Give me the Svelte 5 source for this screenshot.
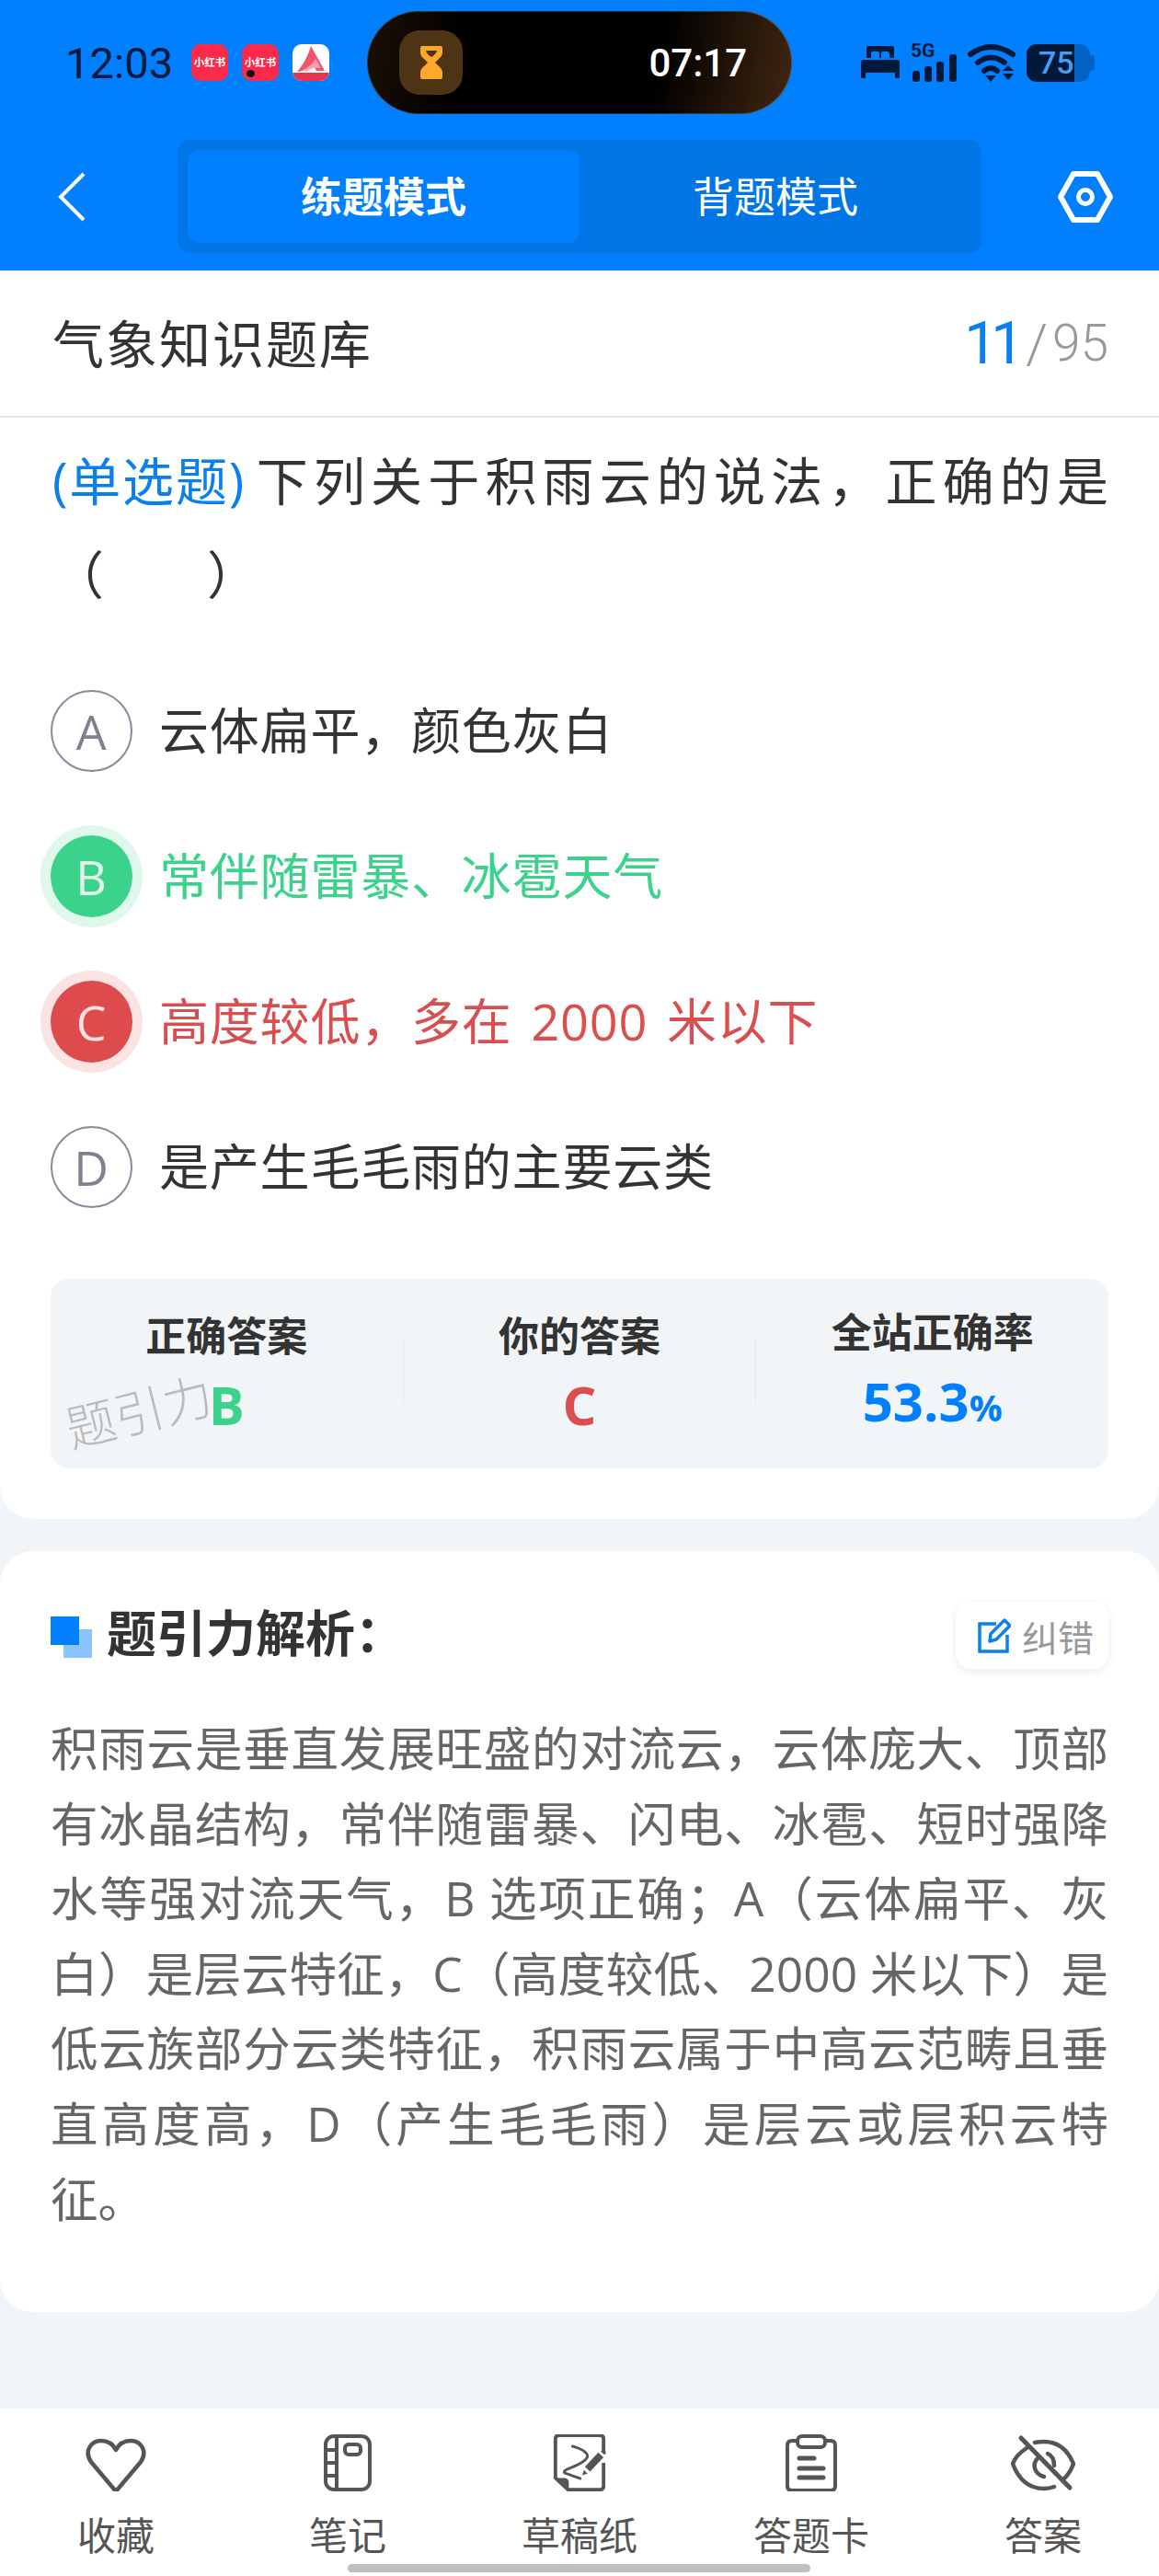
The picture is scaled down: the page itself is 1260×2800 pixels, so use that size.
<script>
	const options = [
		{ key: 'A', text: '云体扁平，颜色灰白', state: '' },
		{ key: 'B', text: '常伴随雷暴、冰雹天气', state: 'right' },
		{ key: 'C', text: '高度较低，多在 2000 米以下', state: 'wrong' },
		{ key: 'D', text: '是产生毛毛雨的主要云类', state: '' }
	];
	const analysis = '积雨云是垂直发展旺盛的对流云，云体庞大、顶部有冰晶结构，常伴随雷暴、闪电、冰雹、短时强降水等强对流天气，B 选项正确；A（云体扁平、灰白）是层云特征，C（高度较低、2000 米以下）是低云族部分云类特征，积雨云属于中高云范畴且垂直高度高，D（产生毛毛雨）是层云或层积云特征。';
</script>

<div class="page">
	<header>
		<div class="status">
			<div class="status-left">
				<span class="clock">12:03</span>
				<span class="app red">小红书</span>
				<span class="app red">小红书<i class="rec"></i></span>
				<span class="app white">
					<svg width="40" height="40" viewBox="0 0 40 40">
						<path d="M20 2 L35 29 L26 29 L22 21 C18 26 13 29 5 30 C12 22 17 12 20 2Z" fill="#f0556c"/>
						<path d="M12 28 C18 25 22 21 25 16 L31 26 C25 25 19 26 15 30Z" fill="#f9a3ae"/>
						<rect x="0" y="31" width="40" height="9" fill="#e8344e"/>
					</svg>
				</span>
			</div>
			<div class="island">
				<span class="timer-icon">
					<svg width="26" height="38" viewBox="0 0 26 38">
						<path d="M3 1 H23 Q25 1 25 3 V8 Q25 12 21 15 L17 19 L21 23 Q25 26 25 30 V35 Q25 37 23 37 H3 Q1 37 1 35 V30 Q1 26 5 23 L9 19 L5 15 Q1 12 1 8 V3 Q1 1 3 1Z" fill="#ffa62b"/>
						<path d="M7 6 H19 Q18 10 13 13 Q8 10 7 6Z" fill="#4d3414"/>
					</svg>
				</span>
				<span class="timer">07:17</span>
			</div>
			<div class="status-right">
				<svg width="42" height="36" viewBox="0 0 42 36" fill="#00193a">
					<path d="M6 2 Q6 0 8 0 H34 Q36 0 36 2 V13 H31 V8 Q31 6 29 6 H24 Q22 6 22 8 V13 H20 V8 Q20 6 18 6 H13 Q11 6 11 8 V13 H6Z"/>
					<path d="M3 15 H39 Q42 15 42 18 V34 Q42 35 41 35 H38 Q37 35 37 34 V29 H5 V34 Q5 35 4 35 H1 Q0 35 0 34 V18 Q0 15 3 15Z"/>
				</svg>
				<span class="signal">
					<span class="five-g">5G</span>
					<svg width="50" height="30" viewBox="0 0 50 30" fill="#00193a">
						<rect x="2" y="18" width="8" height="12" rx="3"/>
						<rect x="15" y="13" width="8" height="17" rx="3"/>
						<rect x="28" y="8" width="8" height="22" rx="3"/>
						<rect x="42" y="0" width="8" height="30" rx="3"/>
					</svg>
				</span>
				<svg width="52" height="42" viewBox="0 0 52 42">
					<g fill="none" stroke="#00193a" stroke-width="6" stroke-linecap="round">
						<path d="M3 12 Q25 -4 49 12"/>
						<path d="M11 21 Q25 10 40 21"/>
						<path d="M18 30 Q25 24 32 30"/>
					</g>
					<path d="M19 35 H31 L25 42Z M44 24 L50 30 H38Z M38 33 H50 L44 40Z" fill="#00193a"/>
				</svg>
				<span class="battery"><span class="level">75</span></span>
			</div>
		</div>
		<nav class="mode">
			<svg class="back" width="30" height="54" viewBox="0 0 30 54">
				<path d="M28 2 L3 27 L28 52" fill="none" stroke="#fff" stroke-width="4"/>
			</svg>
			<div class="tabs">
				<span class="tab active">练题模式</span>
				<span class="tab">背题模式</span>
			</div>
			<svg class="gear" width="62" height="56" viewBox="0 0 62 56">
				<path d="M18 3 H44 L58 28 L44 53 H18 L4 28Z" fill="none" stroke="#fff" stroke-width="6" stroke-linejoin="round"/>
				<circle cx="31" cy="28" r="7.5" fill="none" stroke="#fff" stroke-width="5"/>
			</svg>
		</nav>
	</header>

	<section class="card question-card">
		<div class="title-bar">
			<span class="bank">气象知识题库</span>
			<span class="count"><b>11</b><em>/</em><span>95</span></span>
		</div>
		<p class="question"><span class="tag">(单选题)</span> 下列关于积雨云的说法，正确的是（　　）</p>
		<ul class="options">
			{#each options as opt}
				<li class={opt.state}>
					<span class="mark">{opt.key}</span>
					<span class="opt-text">{opt.text}</span>
				</li>
			{/each}
		</ul>
		<div class="stats">
			<div class="stat">
				<span class="label">正确答案</span>
				<span class="value green">B</span>
			</div>
			<i class="divider"></i>
			<div class="stat">
				<span class="label">你的答案</span>
				<span class="value red-text">C</span>
			</div>
			<i class="divider"></i>
			<div class="stat">
				<span class="label">全站正确率</span>
				<span class="value blue">53.3<small>%</small></span>
			</div>
			<span class="watermark">题引力</span>
		</div>
	</section>

	<section class="card analysis-card">
		<div class="analysis-head">
			<h2><i class="bullet"></i>题引力解析：</h2>
			<span class="report">
				<svg width="36" height="38" viewBox="0 0 36 38" fill="none" stroke="#0a7fee" stroke-width="3.5">
					<path d="M20 6 H2 V36 H32 V18"/>
					<path d="M13 25 L14 17 L29 2 L35 8 L20 23Z" stroke-linejoin="round"/>
				</svg>
				纠错
			</span>
		</div>
		<p class="analysis">{analysis}</p>
	</section>

	<footer>
		<div class="tool">
			<svg width="66" height="62" viewBox="0 -3 66 62" fill="none" stroke="#555" stroke-width="4.5" stroke-linejoin="round">
				<path d="M33 59 L6 27 C-2 15 6 4 17 4 C24 4 30 8 33 14 C36 8 42 4 49 4 C60 4 68 15 60 27Z"/>
			</svg>
			<span>收藏</span>
		</div>
		<div class="tool">
			<svg width="66" height="62" viewBox="0 0 66 62" fill="none" stroke="#555" stroke-width="4">
				<rect x="9" y="2" width="48" height="58" rx="9"/>
				<path d="M21 2 V60 M9 17 H21 M9 31 H21 M9 45 H21"/>
				<rect x="30" y="11" width="17" height="11" rx="4"/>
			</svg>
			<span>笔记</span>
		</div>
		<div class="tool">
			<svg width="66" height="62" viewBox="0 0 66 64" fill="none" stroke="#555" stroke-width="4">
				<path d="M60 20 V5 Q60 1 56 1 H10 Q6 1 6 5 V49 L20 62 H56 Q60 62 60 58 V32"/>
				<path d="M7 49 H17 Q21 50 21 54 V61Z" fill="#555" stroke="none"/>
				<path d="M24 13 Q42 18 42 25 Q40 31 22 38 Q12 42 18 44 Q24 46 35 50" stroke-width="3"/>
				<path d="M57 23 L42 39" stroke-width="8"/>
				<path d="M36 46 L38 40 L42 44Z" fill="#555" stroke="none"/>
				<path d="M58 18 L62 22" stroke-width="3"/>
			</svg>
			<span>草稿纸</span>
		</div>
		<div class="tool">
			<svg width="66" height="62" viewBox="0 0 66 62" fill="none" stroke="#555" stroke-width="4" stroke-linecap="round">
				<path d="M17 7 H12 Q7 7 7 12 V56 Q7 61 12 61 H54 Q59 61 59 56 V12 Q59 7 54 7 H49"/>
				<rect x="18" y="2" width="30" height="12" rx="5"/>
				<path d="M20 26 H36 M20 37 H46 M20 47 H46" stroke-width="5"/>
			</svg>
			<span>答题卡</span>
		</div>
		<div class="tool">
			<svg width="70" height="62" viewBox="0 -3 70 62" fill="none" stroke="#555" stroke-width="4.5" stroke-linecap="round">
				<path d="M17 12 Q5 20 2 29 Q12 56 36 56 Q42 56 47 54 M26 6 Q30 5 36 5 Q58 5 68 29 Q64 40 57 46"/>
				<path d="M30 22 Q24 28 26 34 Q28 41 36 43 M40 18 Q47 21 47 31"/>
				<path d="M11 1 L64 55" stroke-width="5"/>
			</svg>
			<span>答案</span>
		</div>
	</footer>
	<div class="home-bar"></div>
</div>

<style>
:global(body) {
	margin: 0;
	background: #f2f5f8;
	font-family: "Open Sans", "Noto Sans CJK SC", sans-serif;
}

.page {
	position: relative;
	display: flex;
	flex-direction: column;
	min-height: 2800px;
	color: #333;
}

header {
	background: #007fff;
	height: 294px;
	padding-top: 12px;
	box-sizing: border-box;
}

.status {
	display: flex;
	align-items: center;
	height: 112px;
}

.status-left {
	display: flex;
	align-items: center;
	flex: none;
	gap: 15px;
	width: 399px;
	padding-left: 71px;
	box-sizing: border-box;
}

.clock {
	font: 400 47px Roboto, sans-serif;
	color: #00193a;
	width: 122px;
}

.app {
	position: relative;
	display: block;
	flex: none;
	width: 40px;
	height: 40px;
	border-radius: 10px;
	overflow: hidden;
	font-size: 11.5px;
	font-weight: 700;
	line-height: 40px;
	text-align: center;
	color: #fff;
	white-space: nowrap;
}

.app.red {
	background: #fb2a4a;
}

.app.white {
	background: #fff;
}

.app svg {
	display: block;
}

.rec {
	position: absolute;
	left: 5px;
	bottom: 4px;
	width: 9px;
	height: 8px;
	border-radius: 50%;
	background: #111;
}

.island {
	display: flex;
	align-items: center;
	justify-content: space-between;
	flex: none;
	width: 462px;
	height: 112px;
	padding: 0 49px 0 35px;
	box-sizing: border-box;
	border-radius: 56px;
	background: linear-gradient(100deg, #1c1006 0%, #000 22%, #000 68%, #412710 100%);
	box-shadow: inset 0 0 0 1px rgba(255, 255, 255, .18);
}

.timer-icon {
	display: flex;
	align-items: center;
	justify-content: center;
	width: 69px;
	height: 70px;
	border-radius: 22px;
	background: #4d3414;
}

.timer {
	font: 500 42px Roboto, sans-serif;
	color: #fff;
}

.status-right {
	display: flex;
	align-items: center;
	gap: 12px;
	margin-left: 75px;
}

.signal {
	position: relative;
	display: block;
	width: 50px;
	height: 42px;
}

.signal svg {
	position: absolute;
	left: 0;
	bottom: 0;
}

.five-g {
	position: absolute;
	left: 0;
	top: -3px;
	font: 700 21px/22px Roboto, sans-serif;
	color: #00193a;
}

.battery {
	position: relative;
	display: block;
	width: 69px;
	height: 41px;
	border-radius: 11px;
	background: #0062c4;
}

.battery::after {
	content: '';
	position: absolute;
	right: -5px;
	top: 12px;
	width: 5px;
	height: 17px;
	border-radius: 0 4px 4px 0;
	background: #0062c4;
}

.level {
	display: block;
	width: 52px;
	height: 41px;
	padding-left: 13px;
	box-sizing: border-box;
	border-radius: 11px 0 0 11px;
	background: #00193a;
	overflow: hidden;
	font: 500 34px/41px Roboto, sans-serif;
	color: #4a9bf0;
}

.mode {
	display: flex;
	align-items: center;
	margin-top: 28px;
	padding-left: 63px;
}

.back {
	flex: none;
}

.tabs {
	display: flex;
	width: 874px;
	height: 123px;
	margin-left: 100px;
	padding: 11px;
	box-sizing: border-box;
	border-radius: 14px;
	background: #0075e6;
}

.tab {
	flex: 1;
	border-radius: 12px;
	font-size: 45px;
	line-height: 101px;
	text-align: center;
	color: #fff;
}

.tab.active {
	background: #007fff;
	font-weight: 700;
}

.gear {
	margin-left: 82px;
}

.card {
	background: #fff;
}

.question-card {
	border-radius: 0 0 36px 36px;
	padding-bottom: 55px;
}

.title-bar {
	display: flex;
	align-items: center;
	justify-content: space-between;
	height: 158px;
	padding: 0 55px 0 57px;
	border-bottom: 2px solid #e2e2e2;
}

.bank {
	padding-bottom: 6px;
	font-size: 56px;
	letter-spacing: 2px;
}

.count {
	display: flex;
	align-items: center;
	font-family: Roboto, sans-serif;
	font-weight: 300;
	font-size: 55px;
	color: #999;
}

.count b {
	font-size: 64px;
	font-weight: 400;
	letter-spacing: -7px;
	color: #0a7fee;
}

.count em {
	font-style: normal;
	font-size: 60px;
	margin: 0 5px 0 9px;
}

.question {
	margin: 17px 55px 0 57px;
	font-size: 56px;
	line-height: 102px;
	text-align: justify;
	word-spacing: -9px;
}

.tag {
	display: inline-block;
	letter-spacing: 1.8px;
	color: #0a7fee;
}

.options {
	list-style: none;
	margin: 40px 0 0;
	padding: 0 55px;
}

.options li {
	display: flex;
	align-items: center;
	gap: 29px;
	height: 158px;
	font-size: 54px;
	letter-spacing: .8px;
	word-spacing: 6px;
	color: #333;
}

.opt-text {
	padding-bottom: 6px;
}

.mark {
	display: flex;
	align-items: center;
	justify-content: center;
	flex: none;
	width: 89px;
	height: 89px;
	box-sizing: border-box;
	border: 2px solid #8a8a9c;
	border-radius: 50%;
	font: 400 52px "Open Sans", sans-serif;
	color: #80808f;
}

.right {
	color: #3bd28b !important;
}

.wrong {
	color: #d94f4f !important;
}

.right .mark {
	border: 0;
	background: #3bd28b;
	color: #ddf6e9;
	box-shadow: 0 0 0 11px #e0f7ec;
}

.wrong .mark {
	border: 0;
	background: #dd4b4d;
	color: #fbe0e0;
	box-shadow: 0 0 0 11px #fae3e3;
}

.stats {
	position: relative;
	display: grid;
	grid-template-columns: 1fr auto 1fr auto 1fr;
	align-items: center;
	margin: 43px 55px 0;
	padding: 28px 0 36px;
	border-radius: 20px;
	background: #f2f5f8;
}

.stat {
	display: flex;
	flex-direction: column;
	align-items: center;
	gap: 15px;
}

.label {
	font-size: 44px;
	font-weight: 700;
	line-height: 60px;
}

.value {
	font: 700 58px/60px "Open Sans", sans-serif;
}

.value small {
	font-size: 40px;
}

.green {
	color: #3bd28b;
}

.red-text {
	color: #d94f4f;
}

.blue {
	color: #007fff;
}

.divider {
	width: 1px;
	height: 71px;
	background: #e6e9ec;
}

.watermark {
	position: absolute;
	left: 15px;
	top: 112px;
	font-size: 54px;
	font-weight: 300;
	line-height: 64px;
	color: #bbb;
	transform: rotate(-14deg);
}

.analysis-card {
	margin-top: 35px;
	border-radius: 36px;
	padding: 55px 55px 82px;
}

.analysis-head {
	display: flex;
	align-items: center;
	justify-content: space-between;
	height: 73px;
}

h2 {
	position: relative;
	margin: 0;
	padding: 0 0 4px 61px;
	font-size: 54px;
	font-weight: 700;
	line-height: 69px;
}

.bullet {
	position: absolute;
	left: 14px;
	top: 30px;
	width: 31px;
	height: 31px;
	background: #8cc4ff;
}

.bullet::before {
	content: '';
	position: absolute;
	left: -14px;
	top: -14px;
	width: 31px;
	height: 31px;
	background: #007fff;
}

.report {
	display: flex;
	align-items: center;
	gap: 12px;
	width: 166px;
	height: 73px;
	padding-left: 24px;
	box-sizing: border-box;
	border-radius: 16px;
	background: #fff;
	box-shadow: 0 3px 10px rgba(0, 0, 0, .08);
	font-size: 39px;
	color: #999;
}

.analysis {
	margin: 46px 0 0;
	font-size: 51.5px;
	line-height: 81.6px;
	text-align: justify;
	color: #666;
}

footer {
	display: grid;
	grid-template-columns: repeat(5, 252px);
	height: 182px;
	margin-top: auto;
	background: #fff;
}

.tool {
	display: flex;
	flex-direction: column;
	align-items: center;
	padding-top: 28px;
	font-size: 42px;
	line-height: 60px;
	color: #555;
}

.tool svg {
	display: block;
	margin-bottom: 18px;
}

.home-bar {
	position: absolute;
	left: 378px;
	bottom: 4px;
	width: 503px;
	height: 9px;
	border-radius: 5px;
	background: #bfbfbf;
}
</style>
